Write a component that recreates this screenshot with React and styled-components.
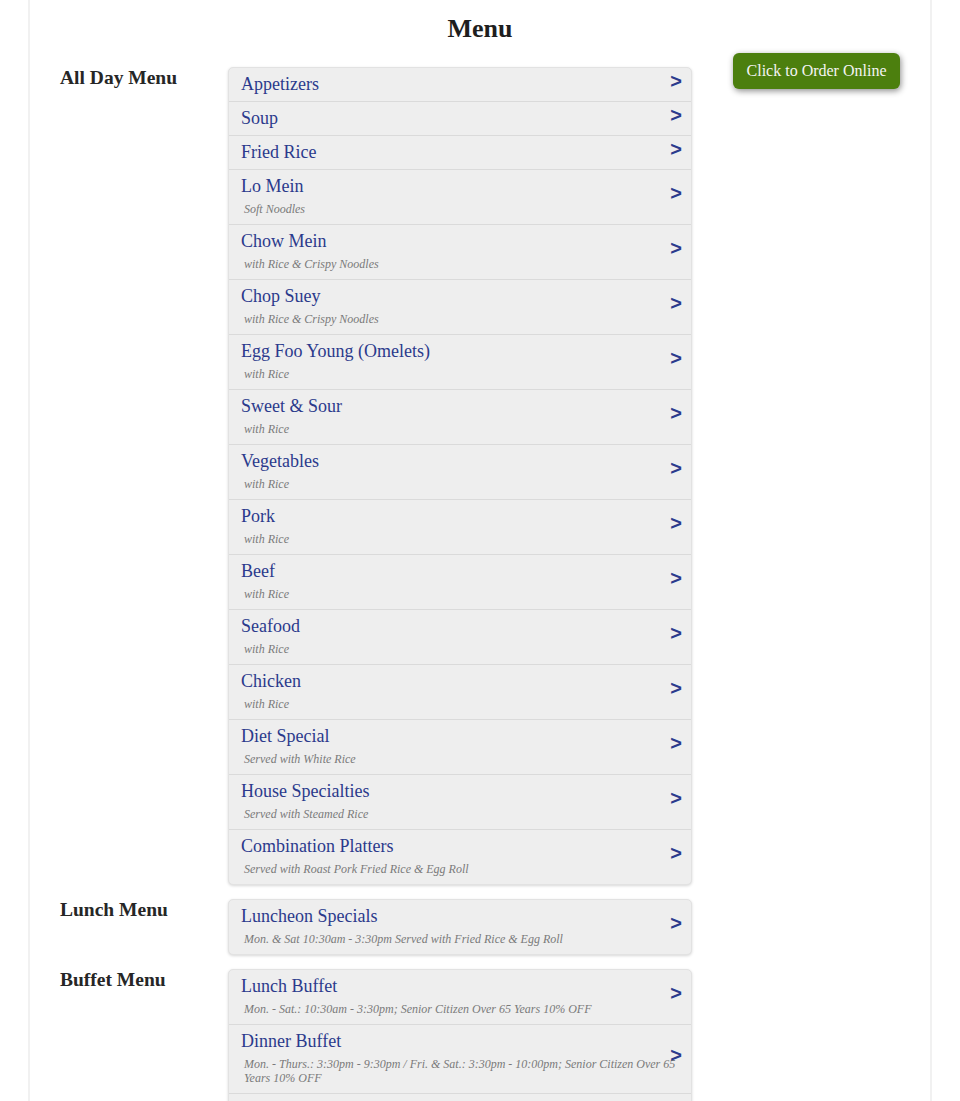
import React from "react";
import styled, { createGlobalStyle } from "styled-components";

const Global = createGlobalStyle`
  html, body { margin: 0; padding: 0; background: #fff; }
  body { font-family: "Liberation Serif", "Times New Roman", serif; color: #222; }
`;

const Page = styled.div`
  margin: 0 28px;
  border-left: 2px solid #f1f1f1;
  border-right: 2px solid #f1f1f1;
  padding: 0 30px 40px;
  min-height: 1101px;
  box-sizing: border-box;
`;

const Heading = styled.h1`
  margin: 0;
  padding: 14px 0 9px;
  font-size: 26px;
  line-height: 30px;
  font-weight: bold;
  text-align: center;
  color: #1e1e1e;
`;

const Body = styled.div`
  display: grid;
  grid-template-columns: 632px 1fr;
  align-items: start;
`;

const Sections = styled.div`
  display: flex;
  flex-direction: column;
  gap: 14px;
  padding-top: 14px;
`;

const Section = styled.section`
  display: grid;
  grid-template-columns: 168px 464px;
  align-items: start;
`;

const Label = styled.h2`
  margin: 0;
  font-size: 19.5px;
  line-height: 22px;
  font-weight: bold;
  color: #262626;
`;

const List = styled.ul`
  list-style: none;
  margin: 0;
  padding: 0;
  background: #eeeeee;
  border: 1px solid #e2e2e2;
  border-radius: 5px;
  box-shadow: 0 1px 3px rgba(0, 0, 0, 0.16);
  overflow: hidden;
`;

const Row = styled.li`
  position: relative;
  padding: 5px 12px 6px;
  border-bottom: 1px solid #dadada;
  cursor: pointer;
  &:last-child { border-bottom: none; }
`;

const Title = styled.div`
  font-size: 18px;
  line-height: 22px;
  color: #2b3a8c;
`;

const Sub = styled.div`
  margin: 5px 0 2px;
  padding-left: 3px;
  font-size: 12px;
  line-height: 14px;
  font-style: italic;
  color: #7a7a7a;
`;

const Arrow = styled.span`
  position: absolute;
  right: 9px;
  top: 50%;
  transform: translateY(-50%);
  margin-top: -4px;
  font-family: "Liberation Sans", Arial, sans-serif;
  font-weight: bold;
  font-size: 20px;
  line-height: 20px;
  color: #2b3a8c;
`;

const Side = styled.div`
  display: flex;
  justify-content: flex-end;
`;

const OrderButton = styled.button`
  font-family: "Liberation Serif", "Times New Roman", serif;
  font-size: 16px;
  line-height: 20px;
  color: #f4f4f4;
  background: #4c7f0e;
  border: none;
  border-radius: 6px;
  padding: 8px 12px;
  width: 167px;
  box-shadow: 1px 2px 6px rgba(0, 0, 0, 0.45);
  cursor: pointer;
`;

const menus = [
  {
    label: "All Day Menu",
    items: [
      ["Appetizers"],
      ["Soup"],
      ["Fried Rice"],
      ["Lo Mein", "Soft Noodles"],
      ["Chow Mein", "with Rice & Crispy Noodles"],
      ["Chop Suey", "with Rice & Crispy Noodles"],
      ["Egg Foo Young (Omelets)", "with Rice"],
      ["Sweet & Sour", "with Rice"],
      ["Vegetables", "with Rice"],
      ["Pork", "with Rice"],
      ["Beef", "with Rice"],
      ["Seafood", "with Rice"],
      ["Chicken", "with Rice"],
      ["Diet Special", "Served with White Rice"],
      ["House Specialties", "Served with Steamed Rice"],
      ["Combination Platters", "Served with Roast Pork Fried Rice & Egg Roll"],
    ],
  },
  {
    label: "Lunch Menu",
    items: [
      ["Luncheon Specials", "Mon. & Sat 10:30am - 3:30pm Served with Fried Rice & Egg Roll"],
    ],
  },
  {
    label: "Buffet Menu",
    items: [
      ["Lunch Buffet", "Mon. - Sat.: 10:30am - 3:30pm; Senior Citizen Over 65 Years 10% OFF"],
      [
        "Dinner Buffet",
        "Mon. - Thurs.: 3:30pm - 9:30pm / Fri. & Sat.: 3:30pm - 10:00pm; Senior Citizen Over 65 Years 10% OFF",
      ],
      ["Sunday Buffet", "All Day; Senior Citizen Over 65 Years 10% OFF"],
    ],
  },
];

export default function App() {
  return (
    <>
      <Global />
      <Page>
        <Heading>Menu</Heading>
        <Body>
          <Sections>
            {menus.map((m) => (
              <Section key={m.label}>
                <Label>{m.label}</Label>
                <List>
                  {m.items.map(([t, s]) => (
                    <Row key={t}>
                      <Title>{t}</Title>
                      {s && <Sub>{s}</Sub>}
                      <Arrow>&gt;</Arrow>
                    </Row>
                  ))}
                </List>
              </Section>
            ))}
          </Sections>
          <Side>
            <OrderButton>Click to Order Online</OrderButton>
          </Side>
        </Body>
      </Page>
    </>
  );
}
